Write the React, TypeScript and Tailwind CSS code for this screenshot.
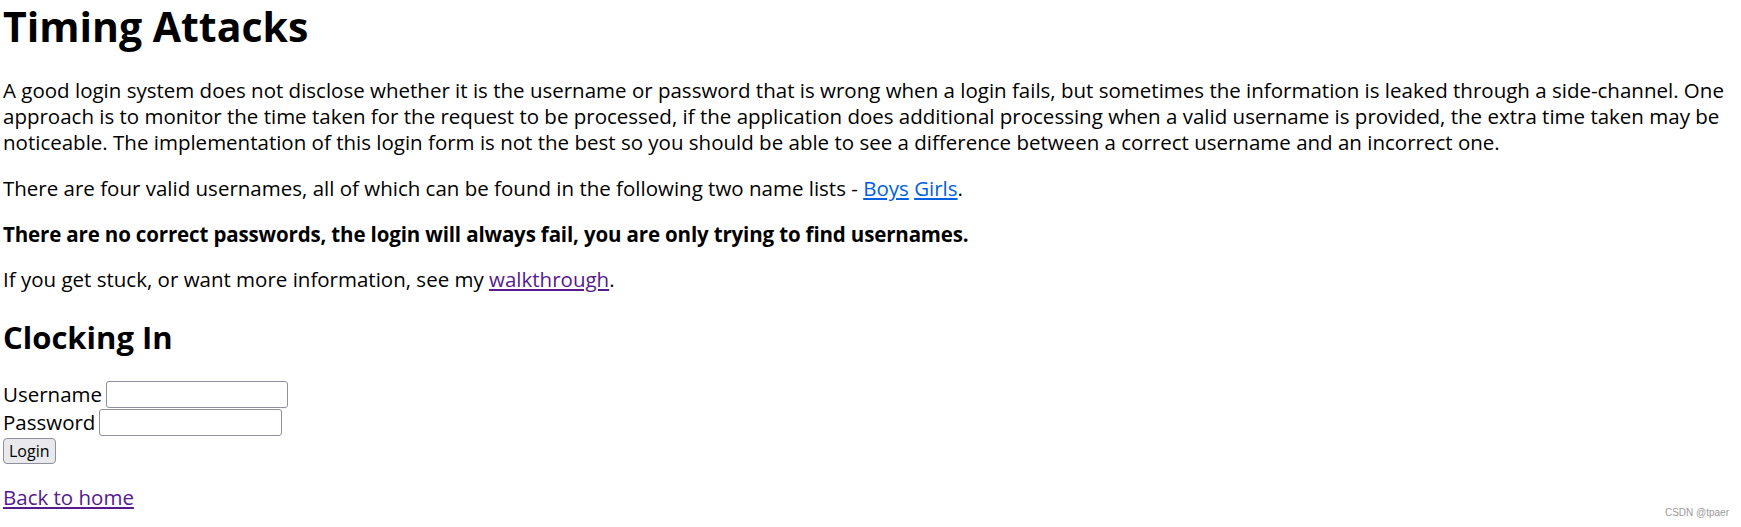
export default function App() {
  return (
    <div className="relative min-h-[527px] bg-white px-[3px] text-[20.5px] leading-[26px] text-black [font-family:'Open_Sans',sans-serif]">
      <h1 className="pt-[2px] text-[41px] leading-[48px] font-bold">Timing Attacks</h1>

      <p className="mt-[27px]">
        A good login system does not disclose whether it is the username or password that is wrong when a login fails, but sometimes the information is leaked through a side-channel. One approach is to monitor the time taken for the request to be processed, if the application does additional processing when a valid username is provided, the extra time taken may be noticeable. The implementation of this login form is not the best so you should be able to see a difference between a correct username and an incorrect one.
      </p>

      <p className="mt-[20px]">
        There are four valid usernames, all of which can be found in the following two name lists -{' '}
        <a href="#" className="text-[#0060df] underline">Boys</a>{' '}
        <a href="#" className="text-[#0060df] underline">Girls</a>.
      </p>

      <p className="mt-[20px] font-bold tracking-[-0.15px]">
        There are no correct passwords, the login will always fail, you are only trying to find usernames.
      </p>

      <p className="mt-[19px]">
        If you get stuck, or want more information, see my{' '}
        <a href="#" className="text-[#551a8b] underline">walkthrough</a>.
      </p>

      <h2 className="mt-[26px] text-[31px] leading-[38px] font-bold">Clocking In</h2>

      <form className="mt-[24px]" onSubmit={(e) => e.preventDefault()}>
        <div className="flex items-center h-[28px]">
          <label>Username</label>
          <input type="text" className="ml-[4px] h-[27px] w-[182px] rounded-[3px] border border-[#8f8f9d] bg-white" />
        </div>
        <div className="flex items-center h-[28px]">
          <label>Password</label>
          <input type="password" className="ml-[4px] h-[27px] w-[183px] rounded-[3px] border border-[#8f8f9d] bg-white" />
        </div>
        <button
          type="submit"
          className="mt-[1px] h-[26px] rounded-[4px] border border-[#8f8f9d] bg-[#e9e9ed] px-[5px] text-[16px] leading-[20px]"
        >
          Login
        </button>
      </form>

      <p className="mt-[20px]">
        <a href="#" className="text-[#551a8b] underline">Back to home</a>
      </p>

      <span className="absolute bottom-[1px] right-[12px] text-[10px] text-[#9a9a9a] [font-family:'Liberation_Sans',sans-serif]">
        CSDN @tpaer
      </span>
    </div>
  );
}
